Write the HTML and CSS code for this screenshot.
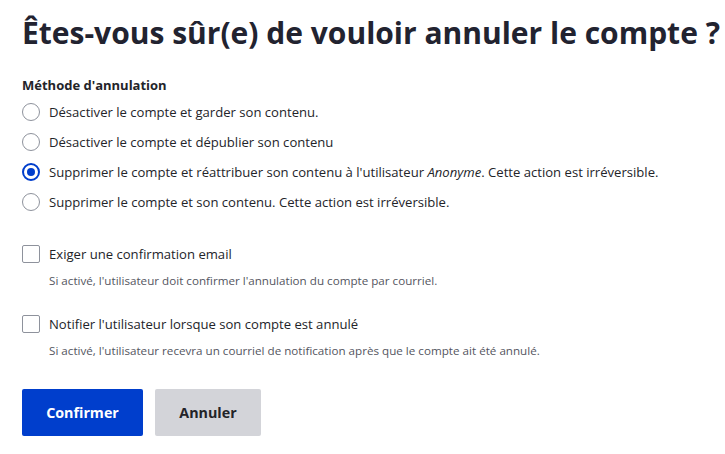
FILE: index.html
```html
<!DOCTYPE html>
<html lang="fr">
<head>
<meta charset="utf-8">
<title>Annuler le compte</title>
<link rel="stylesheet" href="styles.css">
</head>
<body>
<main class="page">
  <h1 class="title">Êtes-vous sûr(e) de vouloir annuler le compte ?</h1>
  <form class="form">
    <fieldset class="group">
      <legend class="legend">Méthode d'annulation</legend>
      <label class="option"><span class="radio"></span><span>Désactiver le compte et garder son contenu.</span></label>
      <label class="option"><span class="radio"></span><span>Désactiver le compte et dépublier son contenu</span></label>
      <label class="option"><span class="radio checked"></span><span>Supprimer le compte et réattribuer son contenu à l'utilisateur <em>Anonyme</em>. Cette action est irréversible.</span></label>
      <label class="option"><span class="radio"></span><span>Supprimer le compte et son contenu. Cette action est irréversible.</span></label>
    </fieldset>
    <div class="check-item">
      <label class="option"><span class="box"></span><span>Exiger une confirmation email</span></label>
      <p class="desc">Si activé, l'utilisateur doit confirmer l'annulation du compte par courriel.</p>
    </div>
    <div class="check-item">
      <label class="option"><span class="box"></span><span>Notifier l'utilisateur lorsque son compte est annulé</span></label>
      <p class="desc">Si activé, l'utilisateur recevra un courriel de notification après que le compte ait été annulé.</p>
    </div>
    <div class="actions">
      <button type="button" class="btn primary">Confirmer</button>
      <button type="button" class="btn secondary">Annuler</button>
    </div>
  </form>
</main>
</body>
</html>
```
FILE: styles.css
```css
* { box-sizing: border-box; }
html, body { margin: 0; padding: 0; background: #fff; }
body {
  font-family: "Open Sans", "Noto Sans", sans-serif;
  color: #232429;
}
.page { padding: 14px 22px 0 22px; }
.title {
  margin: 0;
  font-size: 30px;
  line-height: 38px;
  font-weight: 700;
  color: #222330;
  white-space: nowrap;
}
.form { margin-top: 24px; }
.group { border: 0; margin: 0; padding: 0; }
.legend {
  padding: 0;
  font-size: 13px;
  font-weight: 700;
  line-height: 18px;
  margin-bottom: 3px;
}
.option {
  display: flex;
  align-items: center;
  gap: 9px;
  height: 30px;
  font-size: 13.1px;
  line-height: 18px;
}
.radio {
  flex: none;
  width: 18px;
  height: 18px;
  border: 1px solid #8e929c;
  border-radius: 50%;
  display: flex;
  align-items: center;
  justify-content: center;
}
.radio.checked { border: 2px solid #003ecc; }
.radio.checked::after {
  content: "";
  width: 8px;
  height: 8px;
  border-radius: 50%;
  background: #003ecc;
}
.box {
  flex: none;
  width: 18px;
  height: 18px;
  border: 1px solid #8e929c;
  border-radius: 2px;
}
.check-item { margin-top: 22px; }
.check-item + .check-item { margin-top: 20px; }
.desc {
  margin: 4px 0 0 27px;
  font-size: 11.65px;
  line-height: 16px;
  color: #545560;
}
.actions { display: flex; gap: 12px; margin-top: 30px; }
.btn {
  height: 47px;
  border: 0;
  border-radius: 2px;
  font-family: inherit;
  font-size: 14.3px;
  font-weight: 700;
  padding: 0 22px;
}
.primary { background: #003ecc; color: #fff; width: 121px; }
.secondary { background: #d3d4d9; color: #232429; width: 106px; }
```
